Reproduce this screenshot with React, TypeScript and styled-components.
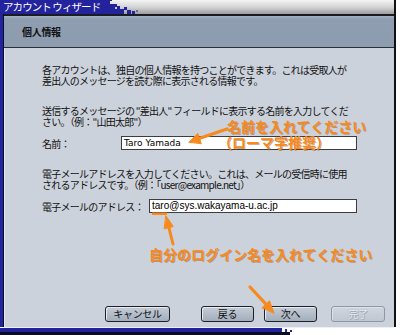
import React from "react";
import styled, { createGlobalStyle } from "styled-components";

const JP = `"Noto Sans CJK JP", "Noto Sans", sans-serif`;
const ORANGE = "#f68a1f";
const BLUE = "#23239e";

const GlobalStyle = createGlobalStyle`
  html, body { margin: 0; padding: 0; background: #ffffff; }
  body { width: 400px; height: 335px; overflow: hidden; font-family: ${JP}; }
`;

const Screen = styled.div`
  position: relative;
  width: 400px;
  height: 335px;
  display: flex;
  flex-direction: column;
  background: #ffffff;
  overflow: hidden;
`;

const TitleBar = styled.div`
  display: flex;
  height: 14px;
  flex: none;
  padding-right: 4px;
`;

const TitleBlue = styled.div`
  width: 105px;
  padding-left: 3px;
  background: ${BLUE};
  display: flex;
  align-items: center;
`;

const TitleText = styled.span`
  display: block;
  width: 97px;
  color: #ffffff;
  font-family: ${JP};
  font-size: 10.5px;
  line-height: 14px;
  letter-spacing: -1.2px;
  white-space: nowrap;
  text-align: justify;
  text-align-last: justify;
  text-justify: inter-character;
`;

const TitleEdge = styled.svg`
  display: block;
  flex: none;
`;

const TitleGray = styled.div`
  flex: 1;
  background: linear-gradient(#f4f4f4, #d0d0d0 55%, #9d9d9d);
  border-right: 2px solid #111111;
`;

const Middle = styled.div`
  flex: 1;
  display: flex;
  min-height: 0;
`;

const LeftRail = styled.div`
  width: 3px;
  background: ${BLUE};
  border-right: 1px solid #0a0a30;
`;

const RightRail = styled.div`
  width: 4px;
  border-left: 2px solid #111111;
  background: #ffffff;
`;

const Panel = styled.div`
  flex: 1;
  display: flex;
  flex-direction: column;
  min-width: 0;
`;

const Header = styled.div`
  height: 31px;
  border-top: 2px solid #1b1b22;
  border-bottom: 1px solid #2c3038;
  background: linear-gradient(#a6b3c3, #8e9db0 3px, #8d9caf);
  padding-left: 18px;
  display: flex;
  align-items: center;
`;

const HeaderTitle = styled.div`
  font: 700 10px/12px ${JP};
  color: #111111;
  letter-spacing: -0.3px;
`;

const Content = styled.div`
  flex: 1;
  display: flex;
  flex-direction: column;
  background: #ccd2db;
  border-left: 1px solid #e4e8ee;
  padding-top: 16px;
`;

const Body = styled.div`
  padding: 0 37px 0 37px;
  display: flex;
  flex-direction: column;
`;

const Para = styled.p<{ $gap: number }>`
  margin: ${(p) => p.$gap}px 0 0;
  font: 10px/11px ${JP};
  letter-spacing: -0.75px;
  color: #111111;
  white-space: nowrap;
`;

const FieldRow = styled.div<{ $label: number; $gap: number }>`
  display: grid;
  grid-template-columns: ${(p) => p.$label}px 1fr;
  align-items: center;
  margin-top: ${(p) => p.$gap}px;
`;

const Label = styled.span`
  font: 10px/11px ${JP};
  letter-spacing: -0.75px;
  color: #111111;
  white-space: nowrap;
`;

const Field = styled.div<{ $font: string; $size: number }>`
  height: 12px;
  border: 1px solid #3a3d44;
  background: #ffffff;
  padding-left: 2px;
  font-family: ${(p) => p.$font};
  font-size: ${(p) => p.$size}px;
  line-height: 12px;
  color: #000000;
  white-space: nowrap;
  overflow: hidden;
`;

const Footer = styled.div`
  margin-top: auto;
  display: flex;
  justify-content: flex-end;
  padding: 0 9px 5px 0;
`;

const Button = styled.div<{ $w: number; $gap: number; $disabled?: boolean }>`
  width: ${(p) => p.$w}px;
  height: 14px;
  margin-left: ${(p) => p.$gap}px;
  border: 1px solid ${(p) => (p.$disabled ? "#8e97a4" : "#1d2027")};
  border-radius: 3px;
  background: ${(p) =>
    p.$disabled
      ? "linear-gradient(#cfd6de, #bfc7d1)"
      : "linear-gradient(#c4ccd7, #a3aebc)"};
  box-shadow: inset 1px 1px 0 ${(p) => (p.$disabled ? "#dde2e8" : "#e6ebf1")};
  display: flex;
  align-items: center;
  justify-content: center;
  font: 10px/12px ${JP};
  letter-spacing: -0.3px;
  color: ${(p) => (p.$disabled ? "#eef1f5" : "#111111")};
  text-shadow: ${(p) => (p.$disabled ? "0 0 1px #7d8896, 1px 1px 0 #a6afbb" : "none")};
`;

const BottomBar = styled.div`
  height: 8px;
  flex: none;
  display: flex;
  flex-direction: column;
`;

const BottomLight = styled.div`
  height: 1px;
  margin: 0 6px 0 3px;
  background: #eef0f4;
`;

const BottomBlueRow = styled.div`
  height: 4px;
  display: flex;
  align-items: stretch;
`;

const BottomBlue = styled.div`
  width: 280px;
  background: ${BLUE};
`;

const BottomDots = styled.svg`
  display: block;
`;

const BottomDark = styled.div`
  height: 3px;
  width: 290px;
  background: #0c0c24;
`;

const Overlay = styled.svg`
  position: absolute;
  left: 0;
  top: 0;
  pointer-events: none;
`;

const Note = styled.div<{ $x: number; $y: number }>`
  position: absolute;
  left: ${(p) => p.$x}px;
  top: ${(p) => p.$y}px;
  font: 700 14px/14px ${JP};
  color: ${ORANGE};
  white-space: nowrap;
  text-shadow: 1px 1px 0 rgba(150, 70, 0, 0.45);
  pointer-events: none;
`;

const pixelRects: [number, number, number, number, string][] = [
  [0, 0, 4, 14, BLUE],
  [2, 1, 3, 3, "#e8e8f4"],
  [4, 4, 5, 10, BLUE],
  [9, 6, 3, 8, BLUE],
  [7, 7, 2, 2, "#c8c8e0"],
  [12, 9, 4, 5, BLUE],
  [16, 7, 3, 3, BLUE],
  [19, 10, 4, 4, BLUE],
  [24, 11, 3, 3, BLUE],
  [28, 10, 2, 2, "#6a6ab0"],
];

export default function App() {
  return (
    <>
      <GlobalStyle />
      <Screen>
        <TitleBar>
          <TitleBlue>
            <TitleText>アカウント ウィザード</TitleText>
          </TitleBlue>
          <TitleEdge width="32" height="14" viewBox="0 0 32 14">
            <defs>
              <linearGradient id="tg" x1="0" y1="0" x2="0" y2="1">
                <stop offset="0" stopColor="#f4f4f4" />
                <stop offset="0.55" stopColor="#d0d0d0" />
                <stop offset="1" stopColor="#9d9d9d" />
              </linearGradient>
            </defs>
            <rect x="0" y="0" width="32" height="14" fill="url(#tg)" />
            {pixelRects.map(([x, y, w, h, c], i) => (
              <rect key={i} x={x} y={y} width={w} height={h} fill={c} />
            ))}
          </TitleEdge>
          <TitleGray />
        </TitleBar>

        <Middle>
          <LeftRail />
          <Panel>
            <Header>
              <HeaderTitle>個人情報</HeaderTitle>
            </Header>
            <Content>
              <Body>
                <Para $gap={0}>
                  各アカウントは、独自の個人情報を持つことができます。これは受取人が
                  <br />
                  差出人のメッセージを読む際に表示される情報です。
                </Para>
                <Para $gap={19}>
                  送信するメッセージの "差出人" フィールドに表示する名前を入力してくだ
                  <br />
                  さい。（例："山田太郎"）
                </Para>
                <FieldRow $label={79} $gap={9}>
                  <Label>名前：</Label>
                  <Field $font={`"DejaVu Sans", sans-serif`} $size={9}>
                    Taro Yamada
                  </Field>
                </FieldRow>
                <Para $gap={18}>
                  電子メールアドレスを入力してください。これは、メールの受信時に使用
                  <br />
                  されるアドレスです。（例：「user@example.net」）
                </Para>
                <FieldRow $label={107} $gap={9}>
                  <Label>電子メールのアドレス：</Label>
                  <Field $font={`"Liberation Sans", Arial, sans-serif`} $size={10}>
                    taro@sys.wakayama-u.ac.jp
                  </Field>
                </FieldRow>
              </Body>
              <Footer>
                <Button $w={63} $gap={0}>
                  キャンセル
                </Button>
                <Button $w={51} $gap={31}>
                  戻る
                </Button>
                <Button $w={51} $gap={10}>
                  次へ
                </Button>
                <Button $w={52} $gap={14} $disabled>
                  完了
                </Button>
              </Footer>
            </Content>
          </Panel>
          <RightRail />
        </Middle>

        <BottomBar>
          <BottomLight />
          <BottomBlueRow>
            <BottomBlue />
            <BottomDots width="14" height="4" viewBox="0 0 14 4">
              <rect x="0" y="0" width="14" height="4" fill="#ffffff" />
              <rect x="0" y="0" width="2" height="4" fill={BLUE} />
              <rect x="5" y="1" width="2" height="3" fill={BLUE} />
              <rect x="10" y="2" width="2" height="2" fill={BLUE} />
            </BottomDots>
          </BottomBlueRow>
          <BottomDark />
        </BottomBar>

        <Overlay width="400" height="335" viewBox="0 0 400 335">
          <g fill={ORANGE} stroke={ORANGE} strokeLinecap="round" strokeLinejoin="round">
            <line x1="227" y1="129" x2="199" y2="138.5" strokeWidth="3.2" />
            <polygon points="189,142 197.8,133.5 201.2,143.4" strokeWidth="1" />
            <line x1="173" y1="244" x2="168.9" y2="227.6" strokeWidth="3" />
            <polygon points="166,216 173.3,226.5 164.5,228.7" strokeWidth="1" />
            <line x1="250" y1="287" x2="265.9" y2="304.2" strokeWidth="3.2" />
            <polygon points="274,313 269.5,300.8 262.2,307.6" strokeWidth="1" />
          </g>
          <rect x="152" y="212.5" width="15" height="2.5" fill={ORANGE} />
        </Overlay>

        <Note $x={227} $y={119}>名前を入れてください</Note>
        <Note $x={218} $y={135}>（ローマ字推奨）</Note>
        <Note $x={149} $y={247}>自分のログイン名を入れてください</Note>
      </Screen>
    </>
  );
}
